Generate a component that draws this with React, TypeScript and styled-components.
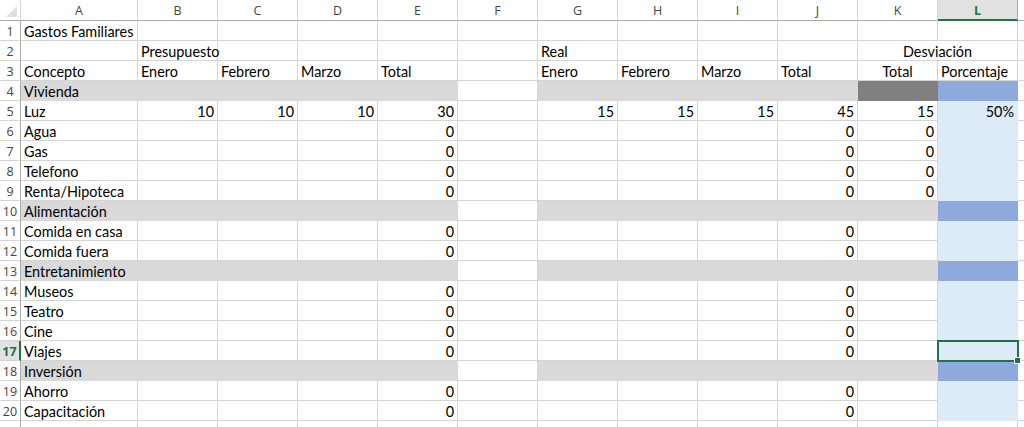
import styled, { createGlobalStyle } from "styled-components";

const GlobalStyle = createGlobalStyle`
  html, body {
    margin: 0;
    padding: 0;
    background: #ffffff;
    overflow: hidden;
  }
`;

const GRID = "#d4d4d4";
const GRAY = "#d9d9d9";
const DARK = "#808080";
const BLUE = "#8ea9db";
const LIGHT = "#ddebf7";
const GREEN = "#217346";

const COLS = ["A", "B", "C", "D", "E", "F", "G", "H", "I", "J", "K", "L"];

const Sheet = styled.div`
  display: grid;
  grid-template-columns: 21px 117px repeat(11, 80px) 1fr;
  grid-auto-rows: 20px;
  grid-template-rows: 21px;
  width: 1024px;
  height: 427px;
  overflow: hidden;
  font-family: Lato, "Liberation Sans", sans-serif;
  font-size: 14.4px;
  color: #000;
`;

const Corner = styled.div`
  position: relative;
  border-right: 1px solid ${GRID};
  border-bottom: 1px solid #ababab;
  &::after {
    content: "";
    position: absolute;
    right: 3px;
    bottom: 3px;
    border-style: solid;
    border-width: 0 0 11px 11px;
    border-color: transparent transparent #dfdfdf transparent;
  }
`;

const ColHead = styled.div<{ $active?: boolean }>`
  display: flex;
  align-items: center;
  justify-content: center;
  font-family: "Open Sans", "Noto Sans", sans-serif;
  font-size: 12.5px;
  padding-top: 1px;
  color: ${(p) => (p.$active ? GREEN : "#444")};
  font-weight: ${(p) => (p.$active ? 700 : 400)};
  background: ${(p) => (p.$active ? "#e1e1e1" : "#fff")};
  border-right: 1px solid ${(p) => (p.$active ? "#ababab" : GRID)};
  border-bottom: ${(p) => (p.$active ? `2px solid ${GREEN}` : "1px solid #ababab")};
`;

const RowHead = styled.div<{ $active?: boolean }>`
  display: flex;
  align-items: center;
  justify-content: center;
  font-family: "Open Sans", "Noto Sans", sans-serif;
  font-size: 12.5px;
  padding-top: 2px;
  color: ${(p) => (p.$active ? GREEN : "#444")};
  font-weight: ${(p) => (p.$active ? 700 : 400)};
  background: ${(p) => (p.$active ? "#e1e1e1" : "#fff")};
  border-right: ${(p) => (p.$active ? `2px solid ${GREEN}` : "1px solid #ababab")};
  border-bottom: 1px solid ${GRID};
`;

const Cell = styled.div<{
  $fill?: string;
  $align?: "left" | "right" | "center";
  $span?: number;
  $selected?: boolean;
  $text?: boolean;
}>`
  position: relative;
  display: flex;
  align-items: center;
  justify-content: ${(p) =>
    p.$align === "right" ? "flex-end" : p.$align === "center" ? "center" : "flex-start"};
  grid-column: span ${(p) => p.$span ?? 1};
  padding: 2px 3px 0 3px;
  white-space: nowrap;
  overflow: visible;
  background: ${(p) => p.$fill ?? "#fff"};
  border-right: 1px solid ${(p) => p.$fill ?? GRID};
  border-bottom: 1px solid ${(p) => p.$fill ?? GRID};
  z-index: ${(p) => (p.$selected ? 2 : p.$text ? 1 : 0)};

  ${(p) =>
    p.$selected &&
    `
    &::after {
      content: "";
      position: absolute;
      left: -1px;
      top: -1px;
      width: calc(100% - 1px);
      height: calc(100% - 1px);
      border: 2px solid ${GREEN};
    }
    &::before {
      content: "";
      position: absolute;
      right: -4px;
      bottom: -4px;
      width: 5px;
      height: 5px;
      background: ${GREEN};
      border: 1px solid #fff;
      z-index: 3;
    }
  `}
`;

type CellDef = {
  t?: string;
  align?: "left" | "right" | "center";
  fill?: string;
  span?: number;
};

type RowDef = Record<string, CellDef>;

const band = (label: string, kFill: string): RowDef => {
  const r: RowDef = {};
  COLS.forEach((c) => (r[c] = { fill: GRAY }));
  r.A = { t: label, fill: GRAY };
  r.F = {};
  r.K = { fill: kFill };
  r.L = { fill: BLUE };
  return r;
};

const item = (label: string, e: string, j: string, k?: string): RowDef => ({
  A: { t: label },
  E: { t: e, align: "right" },
  J: { t: j, align: "right" },
  K: { t: k, align: "right" },
  L: { fill: LIGHT },
});

const rows: RowDef[] = [
  { A: { t: "Gastos Familiares" } },
  { B: { t: "Presupuesto" }, G: { t: "Real" }, K: { t: "Desviación", align: "center", span: 2 } },
  {
    A: { t: "Concepto" },
    B: { t: "Enero" },
    C: { t: "Febrero" },
    D: { t: "Marzo" },
    E: { t: "Total" },
    G: { t: "Enero" },
    H: { t: "Febrero" },
    I: { t: "Marzo" },
    J: { t: "Total" },
    K: { t: "Total", align: "center" },
    L: { t: "Porcentaje" },
  },
  band("Vivienda", DARK),
  {
    A: { t: "Luz" },
    B: { t: "10", align: "right" },
    C: { t: "10", align: "right" },
    D: { t: "10", align: "right" },
    E: { t: "30", align: "right" },
    G: { t: "15", align: "right" },
    H: { t: "15", align: "right" },
    I: { t: "15", align: "right" },
    J: { t: "45", align: "right" },
    K: { t: "15", align: "right" },
    L: { t: "50%", align: "right", fill: LIGHT },
  },
  item("Agua", "0", "0", "0"),
  item("Gas", "0", "0", "0"),
  item("Telefono", "0", "0", "0"),
  item("Renta/Hipoteca", "0", "0", "0"),
  band("Alimentación", GRAY),
  item("Comida en casa", "0", "0"),
  item("Comida fuera", "0", "0"),
  band("Entretanimiento", GRAY),
  item("Museos", "0", "0"),
  item("Teatro", "0", "0"),
  item("Cine", "0", "0"),
  item("Viajes", "0", "0"),
  band("Inversión", GRAY),
  item("Ahorro", "0", "0"),
  item("Capacitación", "0", "0"),
  {},
];

const ACTIVE_ROW = 17;
const ACTIVE_COL = "L";
const VISIBLE_ROWS = 20;

export default function App() {
  return (
    <>
      <GlobalStyle />
      <Sheet>
        <Corner />
        {COLS.map((c) => (
          <ColHead key={c} $active={c === ACTIVE_COL}>
            {c}
          </ColHead>
        ))}
        <ColHead />
        {rows.map((row, i) => {
          const n = i + 1;
          const cells = [];
          let skip = 0;
          for (const c of COLS) {
            if (skip > 0) {
              skip--;
              continue;
            }
            const d = row[c] ?? {};
            if (d.span) skip = d.span - 1;
            cells.push(
              <Cell
                key={c}
                $fill={d.fill}
                $align={d.align}
                $span={d.span}
                $text={!!d.t}
                $selected={n === ACTIVE_ROW && c === ACTIVE_COL}
              >
                {d.t}
              </Cell>
            );
          }
          return [
            <RowHead key={`h${n}`} $active={n === ACTIVE_ROW}>
              {n <= VISIBLE_ROWS ? n : null}
            </RowHead>,
            ...cells,
            <Cell key={`m${n}`} />,
          ];
        })}
      </Sheet>
    </>
  );
}
